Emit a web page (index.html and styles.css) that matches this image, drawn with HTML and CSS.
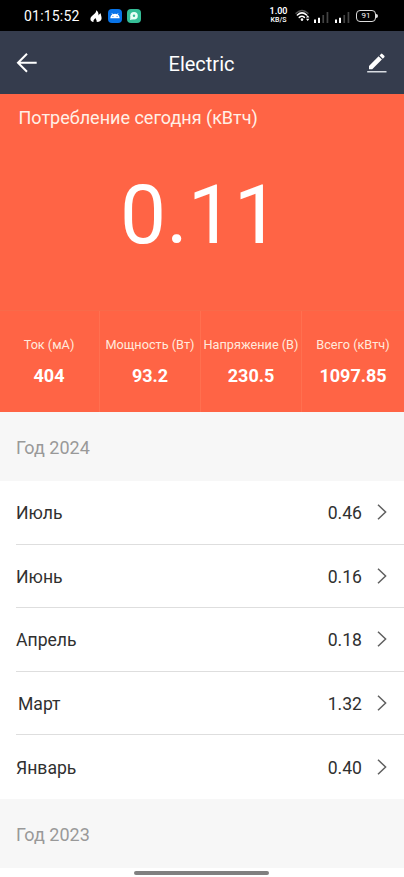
FILE: index.html
```html
<!DOCTYPE html>
<html lang="ru">
<head>
<meta charset="utf-8">
<meta name="viewport" content="width=device-width, initial-scale=1">
<title>Electric</title>
<link rel="stylesheet" href="styles.css">
</head>
<body>
<div class="status">
  <span class="clock">01:15:52</span>
  <svg class="flame" width="12" height="14" viewBox="0 0 12 14"><path fill="#fff" d="M6.200 1.200C6.400 3.200 5 4.200 3.400 5.800 1.800 7.400.4 8.400.4 10c0 1.700 1.300 2.800 3.200 3.100-.7-1.700.6-2.700 1.900-4.200.3 1.500 1.700 2.200 1.200 4.200 3-.1 4.900-1.500 4.900-3.900 0-1.700-.8-2.900-.9-4.900C9.500 4.800 8.900 5.800 8.600 6.600 8.600 4.200 8.200 2.200 6.200 1.200Z"/></svg>
  <svg class="app" width="14" height="14" viewBox="0 0 14 14"><rect width="14" height="14" rx="4" fill="#0873e8"/><path fill="#fff" d="M2.300 9.300C2.500 7.200 3.200 6.200 4.300 5.500L3.500 4.300l.5-.3.9 1.200a5.500 5.500 0 0 1 4.200 0L10 4l.5.3-.8 1.200c1.100.7 1.800 1.700 2 3.800Z"/><path fill="#0873e8" d="M4.400 7.200h1v.8h-1zM8.600 7.200h1v.8h-1z"/></svg>
  <svg class="app" width="14" height="14" viewBox="0 0 14 14"><rect width="14" height="14" rx="4" fill="#35bd96"/><circle cx="7" cy="6.700" r="3.800" fill="#e9fff6"/><path fill="#e9fff6" d="M3.500 8 3 11l3-.8Z"/><circle cx="7" cy="6.700" r="1.200" fill="#35bd96"/></svg>
  <span class="speed"><b>1.00</b><small>KB/S</small></span>
  <svg class="wifi" width="16" height="13" viewBox="0 0 16 13" fill="none" stroke-linecap="round"><path stroke="#555" stroke-width="1.300" d="M1 4.200Q7 -1.200 13 4.200"/><path stroke="#fff" stroke-width="1.600" d="M2.400 6Q7 1.900 11.600 6M4.300 8.400Q7 6.200 9.400 8.300"/><circle cx="7" cy="10.600" r="1.300" fill="#fff"/><path fill="#fff" d="m12.700 6.300 1.700 2.200H11ZM12.700 12l1.700-2.200H11Z"/></svg>
  <svg class="signal" width="15" height="12" viewBox="0 0 15 12"><path fill="#fff" d="M0 8.500h2V12H0zM4 6.800h2V12H4z"/><path fill="#444" d="M8.400 4h1.700v8H8.400zM12.600 1h1.700v11h-1.700z"/></svg>
  <svg class="signal" width="15" height="12" viewBox="0 0 15 12"><path fill="#fff" d="M0 8.500h2V12H0zM4 6.800h2V12H4z"/><path fill="#444" d="M8.400 4h1.700v8H8.400zM12.600 1h1.700v11h-1.700z"/></svg>
  <span class="battery">91</span>
</div>
<header class="bar">
  <svg width="22" height="22" viewBox="0 0 22 22" fill="none" stroke="#fff" stroke-width="2"><path d="M11 1.700 2 10.700l9 9M2.200 10.700H20.700"/></svg>
  <h1>Electric</h1>
  <svg width="22" height="22" viewBox="0 0 22 22"><path fill="#fff" d="M3 17.200V13.900L12.600 4.300l3.300 3.200L6.200 17.200ZM13.500 3.400l1.500-1.500q.7-.7 1.400 0l1.900 1.900q.7.700 0 1.400l-1.500 1.500Z"/><path fill="#d9dce2" d="M1.200 19h19.300v1.500H1.200z"/></svg>
</header>
<section class="hero">
  <h2>Потребление сегодня (кВтч)</h2>
  <div class="total">0.11</div>
</section>
<section class="stats">
  <div><span>Ток (мА)</span><b>404</b></div>
  <div><span>Мощность (Вт)</span><b>93.2</b></div>
  <div><span>Напряжение (В)</span><b>230.5</b></div>
  <div><span>Всего (кВтч)</span><b>1097.85</b></div>
</section>
<h3 class="year">Год 2024</h3>
<ul class="months">
  <li><span>Июль</span><em>0.46</em><svg width="10" height="16" viewBox="0 0 10 16"><path d="m1 .8 7.600 7.200L1 15.200"/></svg></li>
  <li><span>Июнь</span><em>0.16</em><svg width="10" height="16" viewBox="0 0 10 16"><path d="m1 .8 7.600 7.200L1 15.200"/></svg></li>
  <li><span>Апрель</span><em>0.18</em><svg width="10" height="16" viewBox="0 0 10 16"><path d="m1 .8 7.600 7.200L1 15.200"/></svg></li>
  <li><span class="inset">Март</span><em>1.32</em><svg width="10" height="16" viewBox="0 0 10 16"><path d="m1 .8 7.600 7.200L1 15.200"/></svg></li>
  <li><span>Январь</span><em>0.40</em><svg width="10" height="16" viewBox="0 0 10 16"><path d="m1 .8 7.600 7.200L1 15.200"/></svg></li>
</ul>
<h3 class="year">Год 2023</h3>
<div class="gesture"></div>
</body>
</html>
```
FILE: styles.css
```css
* { box-sizing: border-box; }
body {
  margin: 0;
  width: 404px;
  height: 877px;
  overflow: hidden;
  display: flex;
  flex-direction: column;
  background: #fff;
  color: #303030;
  font-family: Roboto, "Liberation Sans", sans-serif;
}
h1, h2, h3, ul { margin: 0; padding: 0; font-weight: 400; }

.status {
  flex: none;
  height: 31px;
  padding: 0 28px 0 24px;
  display: flex;
  align-items: center;
  background: #000;
  color: #fff;
}
.clock { width: 66px; font-size: 14px; letter-spacing: .2px; white-space: nowrap; }
.flame { margin-right: 6px; }
.app { margin-right: 5px; }
.speed {
  margin-left: auto;
  width: 19px;
  display: flex;
  flex-direction: column;
  align-items: center;
}
.speed b { font-size: 9px; line-height: 9px; font-weight: 600; }
.speed small { font-size: 7px; line-height: 8px; font-weight: 500; }
.wifi { margin: 0 3px 0 7px; }
.signal { margin: 2px 6px 0 0; }
.battery {
  position: relative;
  width: 20px;
  height: 12px;
  border: 1.500px solid #ddd;
  border-radius: 4px;
  font-size: 8px;
  line-height: 10px;
  text-align: center;
}
.battery::after {
  content: "";
  position: absolute;
  right: -3px;
  top: 3px;
  width: 2px;
  height: 4px;
  background: #ddd;
  border-radius: 0 2px 2px 0;
}

.bar {
  flex: none;
  height: 63px;
  padding: 0 16px;
  display: flex;
  align-items: center;
  justify-content: space-between;
  background: #353c4d;
  color: #fff;
}
.bar h1 { font-size: 20px; line-height: 24px; padding: 2px 1px 0 0; }

.hero { flex: none; height: 216px; background: #ff6445; color: #fff; }
.hero h2 {
  padding: 13px 0 0 18.500px;
  font-size: 18px;
  line-height: 22px;
  color: #fff0e6;
}
.total {
  margin-top: 42px;
  padding-right: 4px;
  font-size: 82px;
  line-height: 88px;
  text-align: center;
}

.stats {
  flex: none;
  height: 102px;
  display: grid;
  grid-template-columns: 100px 101px 101px 102px;
  background: #ff6445;
  border-top: 1px solid #f86a4a;
  color: #fff;
}
.stats div {
  padding-top: 26px;
  display: flex;
  flex-direction: column;
  align-items: center;
  border-right: 1px solid #ff7050;
  white-space: nowrap;
}
.stats div:first-child { padding-right: 1px; }
.stats div:last-child { border-right: 0; }
.stats span { font-size: 12.700px; line-height: 16px; color: #ffeadd; }
.stats b { margin-top: 13px; font-size: 18px; line-height: 20px; }

.year {
  flex: none;
  height: 69px;
  padding: 1px 0 0 16px;
  font-size: 18px;
  line-height: 69px;
  color: #999;
  background: #f7f7f7;
}
.months { flex: none; list-style: none; padding-left: 16px; }
.months li {
  height: 63.600px;
  padding-right: 17px;
  display: flex;
  align-items: center;
  border-bottom: 1px solid #dedede;
  font-size: 17.600px;
}
.months li:last-child { border: 0; }
.months span, .months em { padding-top: 2px; }
.months .inset { padding-left: 2px; }
.months em { margin-left: auto; margin-right: 15px; font-style: normal; }
.months svg { fill: none; stroke: #606060; stroke-width: 1.500; }

.gesture {
  width: 135px;
  height: 4px;
  margin: 3px 0 0 134px;
  border-radius: 2px;
  background: #808080;
}
```
